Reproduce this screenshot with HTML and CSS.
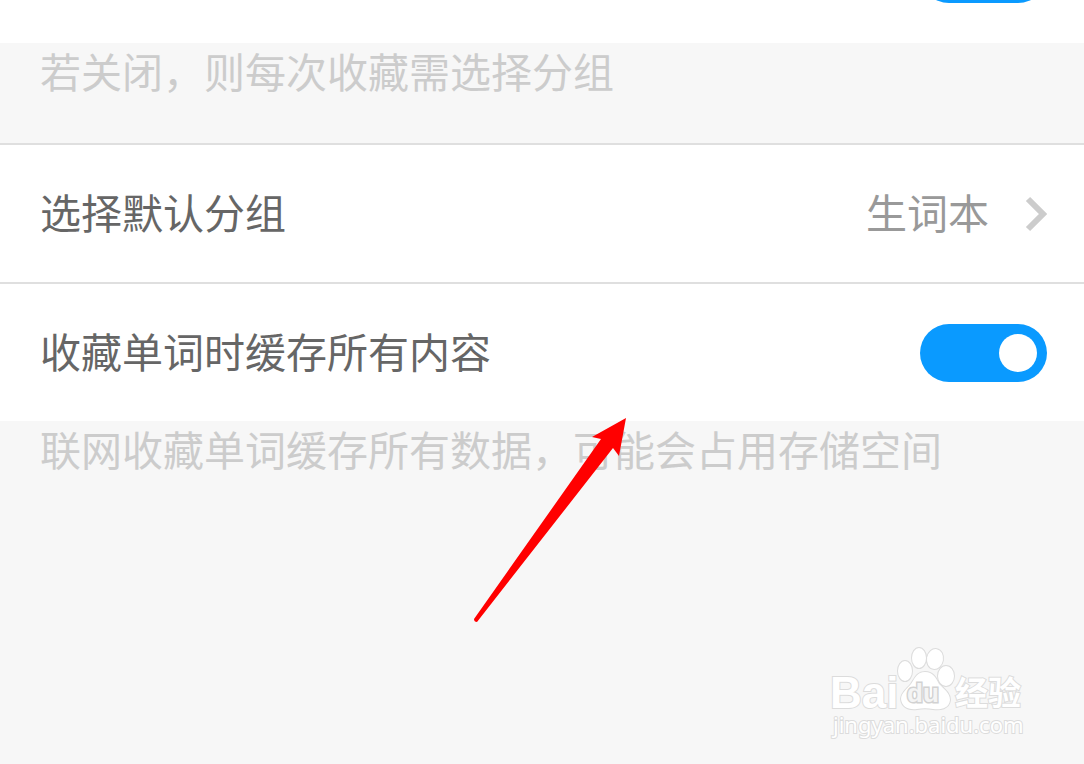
FILE: index.html
```html
<!DOCTYPE html>
<html lang="zh-CN">
<head>
  <meta charset="UTF-8">
  <meta name="viewport" content="width=device-width, initial-scale=1.0">
  <title>收藏设置</title>
  <link rel="stylesheet" href="styles.css">
</head>
<body>

  <main class="settings">
    <div class="row row-cut">
      <input type="checkbox" class="switch" aria-label="收藏到默认分组" checked>
    </div>
    <p class="note">若关闭，则每次收藏需选择分组</p>

    <div class="row">
      <label for="group">选择默认分组</label>
      <button type="button" id="group" class="value">
        <span>生词本</span>
        <svg class="chevron" viewBox="0 0 22 36" aria-hidden="true"><path d="M3 3 L18 18 L3 33"/></svg>
      </button>
    </div>

    <div class="row">
      <label for="cache">收藏单词时缓存所有内容</label>
      <input type="checkbox" id="cache" class="switch" checked>
    </div>
    <p class="note">联网收藏单词缓存所有数据，可能会占用存储空间</p>
  </main>

  <!-- pointer to the cache switch -->
  <svg class="arrow" viewBox="0 0 160 210" aria-hidden="true">
    <path d="M156 3 L122 22 L131 24 L4 204 Q4 207 7 207 L143 33 L149 41 Z"/>
  </svg>

  <svg class="watermark" viewBox="0 0 200 100" role="img" aria-label="Baidu 经验">
    <g class="mark">
      <text class="bai" x="0" y="66">Bai</text>
      <ellipse cx="75" cy="29" rx="7" ry="10"/>
      <ellipse cx="89" cy="16" rx="7" ry="10"/>
      <ellipse cx="105" cy="17" rx="8" ry="10" transform="rotate(10 105 17)"/>
      <ellipse cx="116" cy="34" rx="8" ry="10"/>
      <path d="M95 30 C103 30 106 36 109 42 C114 47 120 51 120 58 C119 67 110 68 103 67 C98 66 92 66 87 67 C78 68 72 65 71 57 C71 51 77 47 81 42 C85 36 87 30 95 30 Z"/>
      <text class="du" x="77" y="60">du</text>
      <text class="cn" x="125" y="63">经验</text>
      <text class="site" x="3" y="91">jingyan.baidu.com</text>
    </g>
  </svg>

</body>
</html>
```

FILE: styles.css
```css
* { box-sizing: border-box; }
body { position: relative; margin: 0; min-height: 100vh; background: #f7f7f7; font-family: "Noto Sans CJK SC", sans-serif; font-size: 41px; line-height: 54px; overflow: hidden; }
.row { display: flex; align-items: center; justify-content: space-between; min-height: 139px; padding: 0 37px 0 40px; background: #fff; border-top: 2px solid #dfdfdf; color: #666; }
.row-cut { height: 43px; min-height: 0; padding-bottom: 40px; border-top: none; align-items: flex-end; justify-content: flex-end; }
.row label, .value span { padding-bottom: 5px; }
.note { margin: 0; padding: 0 40px; color: #ccc; }
.row-cut + .note { padding-bottom: 46px; }

.value { display: flex; align-items: center; gap: 36px; padding: 0; border: none; background: none; font: inherit; line-height: 54px; color: #999; cursor: pointer; }
.chevron { width: 22px; height: 36px; fill: none; stroke: #ccc; stroke-width: 6; }

.switch { appearance: none; flex: none; display: flex; align-items: center; justify-content: flex-end; width: 127px; height: 58px; margin: 0; padding: 0 10px; border-radius: 29px; background: #0a9aff; cursor: pointer; }
.switch::before { content: ""; width: 38px; height: 38px; border-radius: 50%; background: #fff; }
.switch:not(:checked) { justify-content: flex-start; background: #ccc; }

.arrow { position: absolute; left: 470px; top: 415px; width: 160px; height: 210px; fill: #f00; pointer-events: none; }
.watermark { position: absolute; right: 54px; bottom: 22px; width: 200px; height: 100px; overflow: visible; pointer-events: none; }
.mark { fill: #fff; stroke: #dcdcdc; stroke-width: 2; paint-order: stroke; }
.bai { font: bold 44px "Liberation Sans", sans-serif; }
.du { font: bold 26px "Liberation Sans", sans-serif; fill: #f4f4f4; stroke: #d2d2d2; stroke-width: 3; }
.cn { font: bold 33px "Noto Sans CJK SC", sans-serif; }
.site { font: 22px "Noto Sans", sans-serif; }
```
